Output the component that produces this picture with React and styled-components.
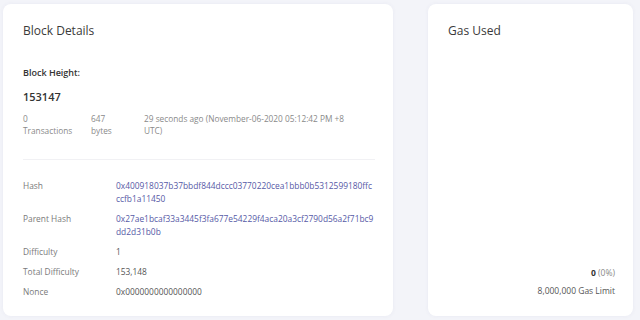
import styled, { createGlobalStyle } from "styled-components";

const GlobalStyle = createGlobalStyle`
  body {
    margin: 0;
    background: #f3f4f9;
    font-family: "Open Sans", "Liberation Sans", sans-serif;
  }
`;

const Page = styled.div`
  display: flex;
  gap: 35px;
  padding: 4px 7px 4px 3px;
  height: 320px;
  box-sizing: border-box;
`;

const Card = styled.div`
  background: #fff;
  border-radius: 8px;
  box-shadow: 0 0 4px rgba(60, 70, 130, 0.06);
  box-sizing: border-box;
  width: ${(p) => p.width}px;
  height: 312px;
  padding: 18px 18px 0 20px;
  display: flex;
  flex-direction: column;
`;

const CardTitle = styled.h2`
  margin: 0;
  font-size: 12px;
  font-weight: 400;
  color: #3a3a3a;
  line-height: 18px;
`;

const Label = styled.div`
  margin-top: 26px;
  font-size: 9px;
  font-weight: 600;
  color: #333;
`;

const Height = styled.div`
  margin-top: 10px;
  font-size: 11px;
  font-weight: 600;
  color: #333;
`;

const Stats = styled.div`
  display: grid;
  grid-template-columns: 68px 53px 210px;
  margin-top: 9px;
  font-size: 8.3px;
  line-height: 12px;
  color: #8a8a8a;
  padding-bottom: 22px;
  border-bottom: 1px solid #f1f1f4;
`;

const Details = styled.div`
  display: grid;
  grid-template-columns: 93px 1fr;
  row-gap: 7px;
  margin-top: 19px;
  font-size: 8.4px;
  line-height: 13px;
`;

const Key = styled.div`
  color: #7a7a7a;
`;

const Value = styled.div`
  color: ${(p) => (p.$link ? "#5659a6" : "#555")};
  word-break: break-all;
`;

const GasBody = styled.div`
  flex: 1;
  display: flex;
  flex-direction: column;
  justify-content: flex-end;
  align-items: flex-end;
  padding-bottom: 19px;
  font-size: 8.5px;
  line-height: 12px;
  color: #555;
  gap: 6px;
`;

const Strong = styled.b`
  font-weight: 700;
  color: #333;
`;

const Muted = styled.span`
  color: #888;
`;

const details = [
  ["Hash", "0x400918037b37bbdf844dccc03770220cea1bbb0b5312599180ffcccfb1a11450", true],
  ["Parent Hash", "0x27ae1bcaf33a3445f3fa677e54229f4aca20a3cf2790d56a2f71bc9dd2d31b0b", true],
  ["Difficulty", "1"],
  ["Total Difficulty", "153,148"],
  ["Nonce", "0x0000000000000000"],
];

export default function App() {
  return (
    <>
      <GlobalStyle />
      <Page>
        <Card width={390}>
          <CardTitle>Block Details</CardTitle>
          <Label>Block Height:</Label>
          <Height>153147</Height>
          <Stats>
            <div>0<br />Transactions</div>
            <div>647<br />bytes</div>
            <div>29 seconds ago (November-06-2020 05:12:42 PM +8 UTC)</div>
          </Stats>
          <Details>
            {details.flatMap(([k, v, link]) => [
              <Key key={k + "-k"}>{k}</Key>,
              <Value key={k + "-v"} $link={link}>{v}</Value>,
            ])}
          </Details>
        </Card>
        <Card width={205}>
          <CardTitle>Gas Used</CardTitle>
          <GasBody>
            <div>
              <Strong>0</Strong> <Muted>(0%)</Muted>
            </div>
            <div>8,000,000 Gas Limit</div>
          </GasBody>
        </Card>
      </Page>
    </>
  );
}
